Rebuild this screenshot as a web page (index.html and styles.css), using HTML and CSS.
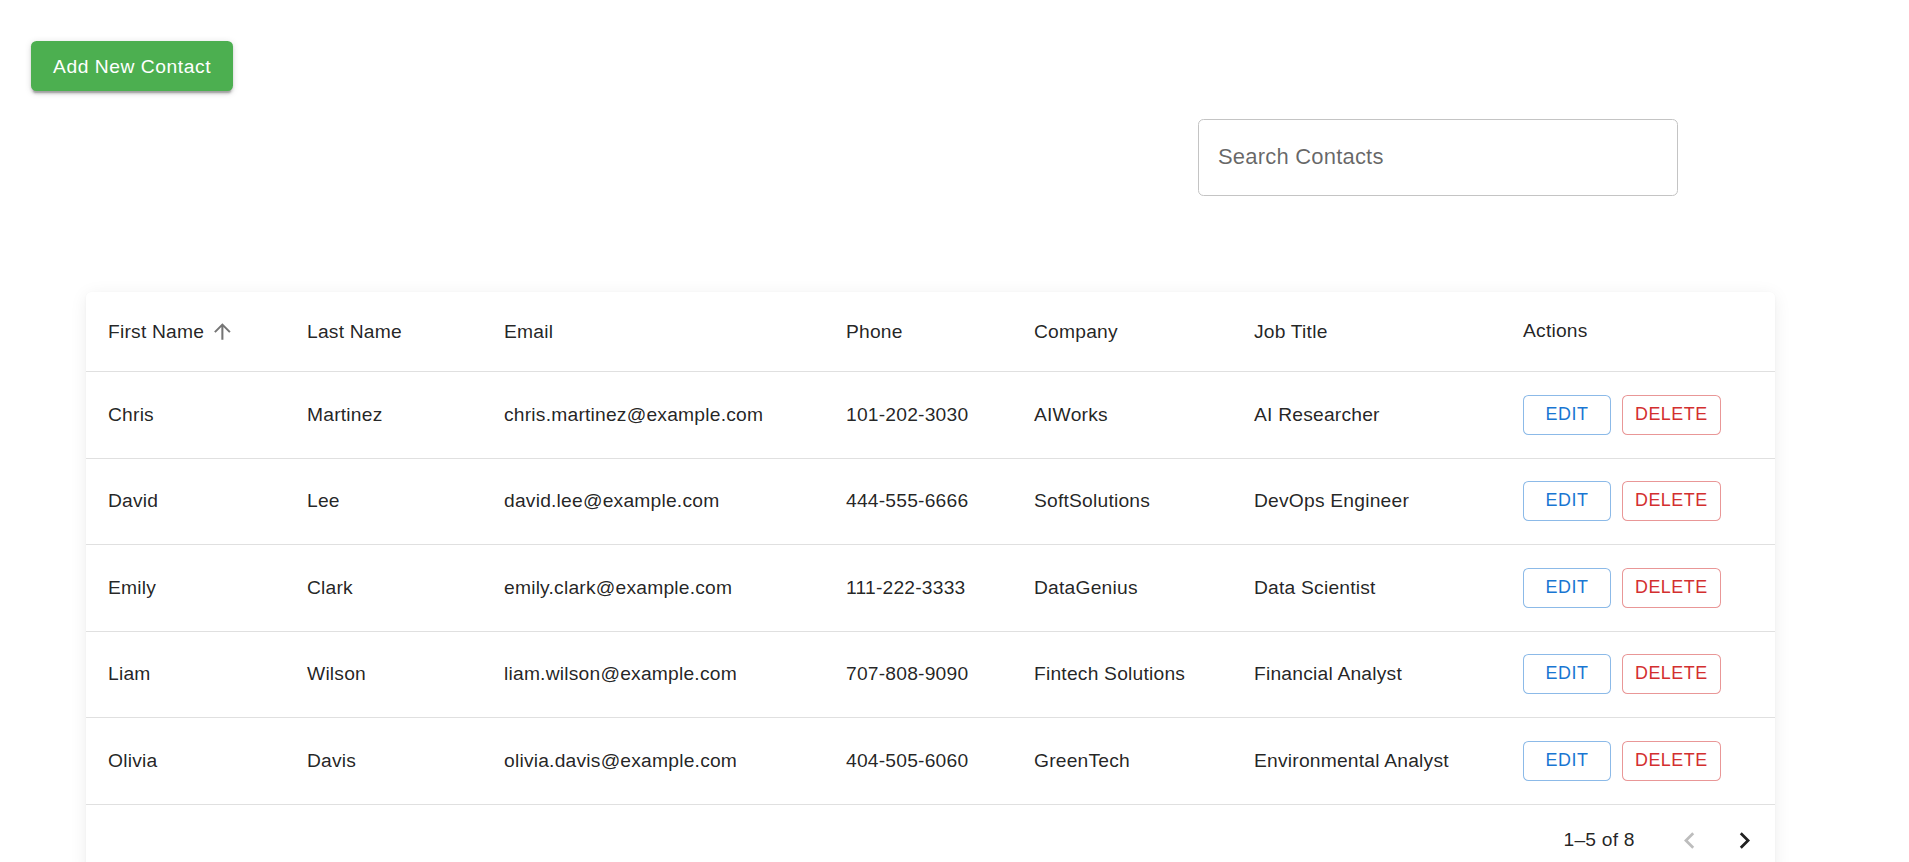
FILE: index.html
```html
<!DOCTYPE html>
<html lang="en">
<head>
<meta charset="utf-8">
<title>Contacts</title>
<link rel="stylesheet" href="styles.css">
</head>
<body>
<div class="page">
  <div class="toolbar">
    <button class="add-btn" type="button">Add New Contact</button>
    <div class="search-wrap">
      <input class="search" type="text" placeholder="Search Contacts">
    </div>
  </div>

  <div class="card">
    <div class="row head">
      <div class="cell"><span class="sort">First Name<svg class="sort-icon" viewBox="0 0 24 24"><path d="M4 12l1.41 1.41L11 7.83V20h2V7.83l5.58 5.59L20 12l-8-8-8 8z"/></svg></span></div>
      <div class="cell">Last Name</div>
      <div class="cell">Email</div>
      <div class="cell">Phone</div>
      <div class="cell">Company</div>
      <div class="cell">Job Title</div>
      <div class="cell actions-head">Actions</div>
    </div>

    <div class="row">
      <div class="cell">Chris</div>
      <div class="cell">Martinez</div>
      <div class="cell">chris.martinez@example.com</div>
      <div class="cell">101-202-3030</div>
      <div class="cell">AIWorks</div>
      <div class="cell">AI Researcher</div>
      <div class="cell actions"><button class="btn edit" type="button">Edit</button><button class="btn delete" type="button">Delete</button></div>
    </div>
    <div class="row">
      <div class="cell">David</div>
      <div class="cell">Lee</div>
      <div class="cell">david.lee@example.com</div>
      <div class="cell">444-555-6666</div>
      <div class="cell">SoftSolutions</div>
      <div class="cell">DevOps Engineer</div>
      <div class="cell actions"><button class="btn edit" type="button">Edit</button><button class="btn delete" type="button">Delete</button></div>
    </div>
    <div class="row">
      <div class="cell">Emily</div>
      <div class="cell">Clark</div>
      <div class="cell">emily.clark@example.com</div>
      <div class="cell">111-222-3333</div>
      <div class="cell">DataGenius</div>
      <div class="cell">Data Scientist</div>
      <div class="cell actions"><button class="btn edit" type="button">Edit</button><button class="btn delete" type="button">Delete</button></div>
    </div>
    <div class="row">
      <div class="cell">Liam</div>
      <div class="cell">Wilson</div>
      <div class="cell">liam.wilson@example.com</div>
      <div class="cell">707-808-9090</div>
      <div class="cell">Fintech Solutions</div>
      <div class="cell">Financial Analyst</div>
      <div class="cell actions"><button class="btn edit" type="button">Edit</button><button class="btn delete" type="button">Delete</button></div>
    </div>
    <div class="row">
      <div class="cell">Olivia</div>
      <div class="cell">Davis</div>
      <div class="cell">olivia.davis@example.com</div>
      <div class="cell">404-505-6060</div>
      <div class="cell">GreenTech</div>
      <div class="cell">Environmental Analyst</div>
      <div class="cell actions"><button class="btn edit" type="button">Edit</button><button class="btn delete" type="button">Delete</button></div>
    </div>

    <div class="pagination">
      <span class="page-info">1–5 of 8</span>
      <button class="icon-btn disabled" type="button" aria-label="Previous page"><svg viewBox="0 0 24 24"><path d="M15.41 16.59 10.83 12l4.58-4.59L14 6l-6 6 6 6z"/></svg></button>
      <button class="icon-btn" type="button" aria-label="Next page"><svg viewBox="0 0 24 24"><path d="M8.59 16.59 13.17 12 8.59 7.41 10 6l6 6-6 6z"/></svg></button>
    </div>
  </div>
</div>
</body>
</html>
```

FILE: styles.css
```css
html, body {
  margin: 0;
  padding: 0;
  background: #ffffff;
}

html {
  overflow-y: scroll;
}

html::-webkit-scrollbar {
  width: 17px;
  background: #f1f1f1;
}

html::-webkit-scrollbar-track {
  background: #f1f1f1;
}

html::-webkit-scrollbar-thumb {
  background: #c1c1c1;
  border-left: 2px solid #f1f1f1;
  border-right: 2px solid #f1f1f1;
}

html::-webkit-scrollbar-button:vertical:end:increment {
  display: block;
  height: 17px;
  background-color: #f1f1f1;
  background-image: conic-gradient(from -45deg at 50% 100%, #505050 90deg, transparent 90deg);
  background-size: 8px 4px;
  background-position: center;
  background-repeat: no-repeat;
  transform: rotate(180deg);
}

html::-webkit-scrollbar-button:vertical:start:decrement {
  display: block;
  height: 0;
}

body {
  font-family: "Liberation Sans", Arial, Helvetica, sans-serif;
  color: rgba(0, 0, 0, 0.87);
}

.page {
  padding: 41px 0 117px 31px;
}

.toolbar {
  display: flex;
  flex-direction: column;
  align-items: flex-start;
}

.add-btn {
  height: 50px;
  padding: 1px 22px 0;
  border: 0;
  border-radius: 5.5px;
  background: #4caf50;
  color: #ffffff;
  font-family: inherit;
  font-size: 19.25px;
  letter-spacing: 0.55px;
  line-height: 1;
  box-shadow: 0 4px 1.4px -2.75px rgba(0, 0, 0, 0.2), 0 2.75px 2.75px 0 rgba(0, 0, 0, 0.14), 0 1.4px 7px 0 rgba(0, 0, 0, 0.12);
  cursor: pointer;
}

.search-wrap {
  margin: 28px 0 0 1167px;
}

.search {
  box-sizing: border-box;
  width: 480px;
  height: 77px;
  padding: 0 19px 1px;
  border: 1px solid #c4c4c4;
  border-radius: 5.5px;
  font-family: inherit;
  font-size: 22px;
  letter-spacing: 0.2px;
  color: rgba(0, 0, 0, 0.87);
  outline: none;
  background: #fff;
}

.search::placeholder {
  color: rgba(0, 0, 0, 0.6);
  opacity: 1;
}

.card {
  margin: 96px 0 0 55px;
  width: 1689px;
  background: #ffffff;
  border-radius: 5.5px;
  box-shadow: 0 3px 18px rgba(0, 0, 0, 0.07), 0 1px 3px rgba(0, 0, 0, 0.04);
}

.row {
  display: grid;
  grid-template-columns: 199px 197px 342px 188px 220px 269px 274px;
  align-items: center;
  box-sizing: border-box;
  height: 86.5px;
  border-bottom: 1px solid #e0e0e0;
  font-size: 19.25px;
  letter-spacing: 0.206px;
}

.row.head {
  height: 80px;
}

.cell {
  padding-left: 22px;
  white-space: nowrap;
}

.actions-head {
  margin-top: -2px;
}

.sort {
  display: inline-flex;
  align-items: center;
}

.sort-icon {
  width: 24.75px;
  height: 24.75px;
  margin: 0 5.5px 0 5.5px;
  fill: rgba(0, 0, 0, 0.54);
}

.actions {
  display: flex;
  gap: 11px;
}

.btn {
  box-sizing: border-box;
  min-width: 88px;
  height: 40px;
  padding: 0 12px;
  background: #ffffff;
  border-radius: 5.5px;
  font-family: inherit;
  font-size: 17.9px;
  letter-spacing: 0.51px;
  text-transform: uppercase;
  line-height: 1;
  cursor: pointer;
}

.btn.edit {
  color: #1976d2;
  border: 1px solid rgba(25, 118, 210, 0.5);
}

.btn.delete {
  color: #d32f2f;
  border: 1px solid rgba(211, 47, 47, 0.5);
}

.pagination {
  display: flex;
  align-items: center;
  justify-content: flex-end;
  height: 71.5px;
  padding-right: 2.75px;
  font-size: 19.25px;
  letter-spacing: 0.206px;
}

.page-info {
  margin-right: 27.5px;
}

.icon-btn {
  display: flex;
  align-items: center;
  justify-content: center;
  width: 55px;
  height: 55px;
  padding: 0;
  border: 0;
  border-radius: 50%;
  background: transparent;
  cursor: pointer;
}

.icon-btn svg {
  width: 33px;
  height: 33px;
  fill: #212121;
}

.icon-btn.disabled svg {
  fill: rgba(0, 0, 0, 0.26);
}
```
